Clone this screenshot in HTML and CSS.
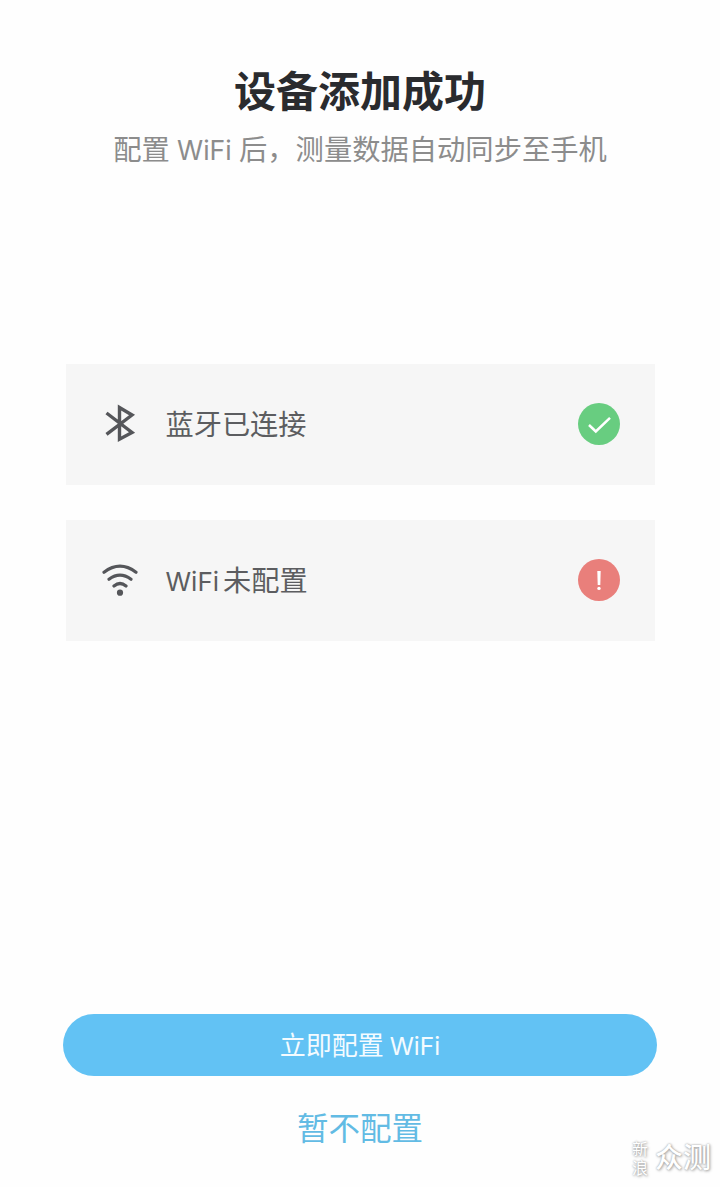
FILE: index.html
```html
<!DOCTYPE html>
<html lang="zh-CN">
<head>
  <meta charset="UTF-8">
  <meta name="viewport" content="width=device-width, initial-scale=1.0">
  <title>设备添加成功</title>
  <link rel="stylesheet" href="styles.css">
</head>
<body>
  <div class="page">
    <header class="header">
      <h1>设备添加成功</h1>
      <p>配置 <span class="latin">WiFi</span> 后，测量数据自动同步至手机</p>
    </header>

    <div class="status-list">
      <div class="status-row">
        <svg class="status-icon" viewBox="0 0 40 40" fill="none" stroke="#55565a" stroke-width="3.4">
          <path d="M6.5 9 32 28.5 19.5 35.2V3.6L32 11 6.5 30.3"/>
        </svg>
        <span class="status-text">蓝牙已连接</span>
        <svg class="badge" viewBox="0 0 42 42" fill="none">
          <circle cx="21" cy="21" r="21" fill="#68cd80"/>
          <path d="M11 22 17.8 28.5 32 14.8" stroke="#fff" stroke-width="2.5"/>
        </svg>
      </div>

      <div class="status-row">
        <svg class="status-icon" viewBox="0 0 40 40" fill="none" stroke="#55565a" stroke-width="3.2" stroke-linecap="round">
          <path d="M4 12.2Q20 0.2 36 12.2M9 19.2Q20 11 31 19.2M14 26Q20 21 26 26"/>
          <circle cx="20" cy="32.7" r="3.1" fill="#55565a" stroke="none"/>
        </svg>
        <span class="status-text wifi-text"><span class="latin">WiFi</span>未配置</span>
        <svg class="badge" viewBox="0 0 42 42">
          <circle cx="21" cy="21" r="21" fill="#e97f7b"/>
          <path d="M19.3 12h3.4l-.4 14h-2.6z" fill="#fff"/>
          <circle cx="21" cy="29.4" r="1.7" fill="#fff"/>
        </svg>
      </div>
    </div>

    <div class="actions">
      <button class="primary-btn">立即配置 <span class="latin">WiFi</span></button>
      <a href="#" class="skip-link">暂不配置</a>
    </div>
  </div>

  <div class="watermark">
    <span class="watermark-small">新浪</span>
    <span class="watermark-big">众测</span>
  </div>
</body>
</html>
```

FILE: styles.css
```css
* {
  box-sizing: border-box;
}
body {
  margin: 0;
  background: #fefefe;
  font-family: "Noto Sans CJK SC", sans-serif;
}
.page {
  height: 1187px;
  display: flex;
  flex-direction: column;
  align-items: center;
}
.latin {
  font-family: Inter, sans-serif;
}
.header {
  height: 364px;
  padding-top: 59px;
  text-align: center;
}
h1 {
  margin: 0;
  font-size: 42px;
  line-height: 60px;
  font-weight: 700;
  color: #2a2b2e;
}
.header p {
  margin: 9px 0 0;
  font-size: 28.3px;
  line-height: 40px;
  color: #8c8c8c;
  white-space: nowrap;
  word-spacing: 1px;
}
.header .latin {
  font-size: 26.5px;
}
.status-list {
  width: 589px;
  display: flex;
  flex-direction: column;
  gap: 35px;
}
.status-row {
  height: 121px;
  padding: 0 35px 1px 34px;
  display: flex;
  align-items: center;
  background: #f6f6f6;
}
.status-icon {
  width: 40px;
  height: 40px;
}
.status-text {
  flex: 1;
  margin-left: 26px;
  padding-bottom: 2px;
  font-size: 28.2px;
  line-height: 40px;
  color: #5c5d60;
}
.wifi-text {
  padding: 1px 0 0;
}
.status-text .latin {
  font-size: 26px;
  margin-right: 4px;
}
.badge {
  width: 42px;
  height: 42px;
}
.actions {
  margin-top: 373px;
  display: flex;
  flex-direction: column;
  align-items: center;
}
.primary-btn {
  width: 594px;
  height: 62px;
  padding: 0 0 3px;
  border: none;
  border-radius: 31px;
  background: #62c2f4;
  color: #f4fbff;
  font-family: inherit;
  font-size: 26px;
}
.primary-btn .latin {
  font-size: 24.5px;
}
.skip-link {
  margin-top: 27px;
  font-size: 31.5px;
  line-height: 46px;
  color: #62bbe4;
  text-decoration: none;
}
.watermark {
  position: absolute;
  left: 632px;
  top: 1139px;
  display: flex;
  align-items: center;
  color: #fff;
  text-shadow: 0 0 2px #999, 1px 1px 3px #aaa;
}
.watermark-small {
  width: 17px;
  font-size: 16px;
  line-height: 19px;
}
.watermark-big {
  margin: -4px 0 0 6px;
  font-size: 28px;
  line-height: 36px;
  font-weight: 500;
}
```
